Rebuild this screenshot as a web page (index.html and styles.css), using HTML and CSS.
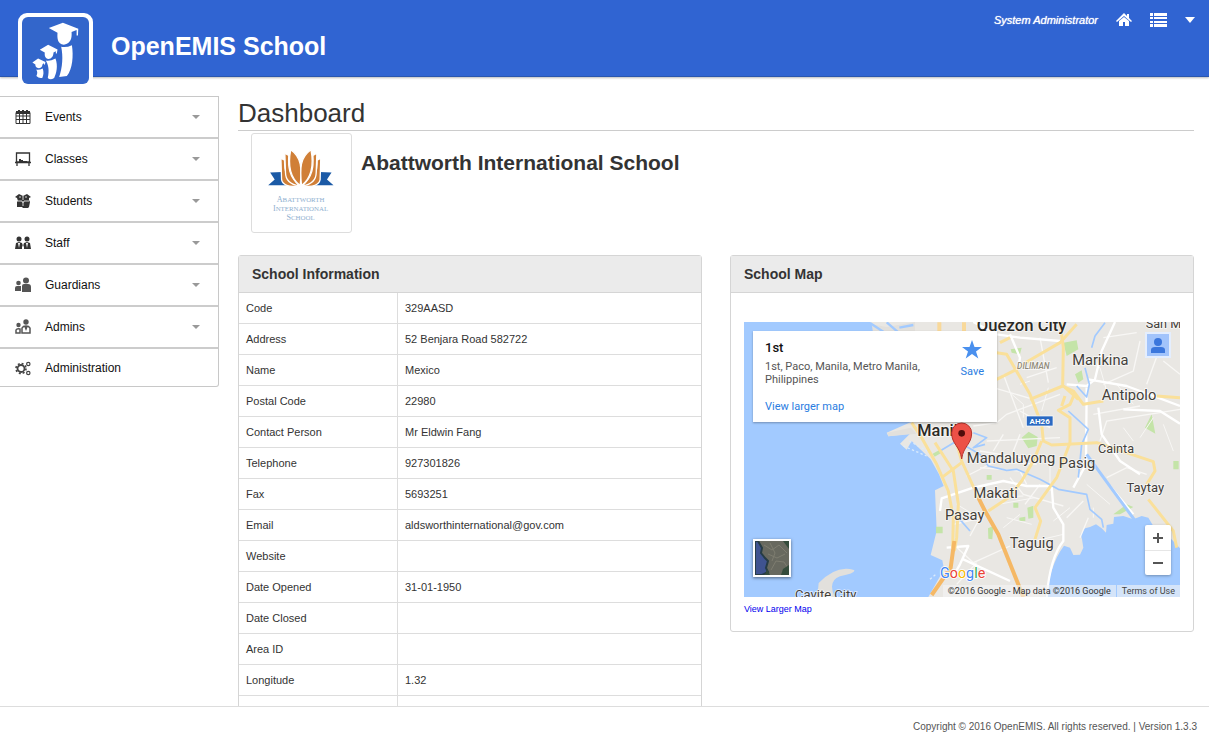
FILE: index.html
```html
<!DOCTYPE html>
<html lang="en">
<head>
    <meta charset="UTF-8">
    <meta name="viewport" content="width=device-width, initial-scale=1.0">
    <title>OpenEMIS School</title>
    <link rel="stylesheet" href="styles.css">
</head>
<body>
    <header class="header">
        <a href="#" class="brand">
            <span class="brand-logo">
                <svg viewBox="0 0 200 200" aria-hidden="true">
                    <g fill="#fff">
                        <path d="M80 33 L122 17 L168 35 L167 55 L163 55 L163 39 L148 45 C149 62 147 79 125 83 C105 81 105 62 106 47 Z"/>
                        <path d="M117 89 Q133 92 149 84 C154 115 151 155 134 176 L111 179 C121 150 123 118 117 89 Z"/>
                        <path d="M53 98 L78 83 L106 97 L104 109 L101 109 L101 102 L94 106 C94 117 88 125 79 125 C69 124 67 116 68 106 Z"/>
                        <path d="M71 130 Q83 133 100 124 C108 146 103 168 96 182 Q84 190 77 182 C82 160 79 143 71 130 Z"/>
                        <path d="M31 136 L48 124 L70 134 L68 144 L65 138 L61 142 C61 150 55 153 50 153 C43 153 39 147 40 142 Z"/>
                        <path d="M42 157 Q50 159 62 154 C65 164 65 172 61 181 Q51 184 43 176 C47 168 46 162 42 157 Z"/>
                    </g>
                </svg>
            </span>
            <span class="brand-name">OpenEMIS School</span>
        </a>
        <nav class="header-nav">
            <span class="user-name">System Administrator</span>
            <a href="#" aria-label="Home">
                <svg width="16" height="14" viewBox="0 0 16 14"><path fill="#fff" d="M8 0 L11 3 V1 H13 V5 L16 8 L15 9 L8 3 L1 9 L0 8 Z M8 4 L13 8 V13 H9 V9 H7 V13 H3 V8 Z"/></svg>
            </a>
            <button type="button" aria-label="Menu">
                <svg width="17" height="14" viewBox="0 0 17 14"><path fill="#fff" d="M0 0h3v3H0z M4 0h13v3H4z M0 4h3v2H0z M4 4h13v2H4z M0 8h3v2H0z M4 8h13v2H4z M0 11h3v3H0z M4 11h13v3H4z"/></svg>
            </button>
            <button type="button" aria-label="Account">
                <svg width="10" height="6" viewBox="0 0 10 6"><path fill="#fff" d="M0 0h10L5 6z"/></svg>
            </button>
        </nav>
    </header>

    <div class="page">
        <nav class="sidebar">
            <button type="button" class="menu-item">
                <svg class="menu-icon" viewBox="0 0 16 16"><path fill="none" stroke="#333" d="M1 3.500h14v11H1z M1 7h14 M1 10.500h14 M4.500 4v10 M8 4v10 M11.500 4v10"/><path fill="#333" d="M1 2h2V1h2v1h2V1h2v1h2V1h2v1h2v3H1z"/></svg>
                <span>Events</span><i class="caret"></i>
            </button>
            <button type="button" class="menu-item">
                <svg class="menu-icon" viewBox="0 0 16 16"><path fill="none" stroke="#333" stroke-width="1.300" d="M1.500 2h13v9h-13z M0 11.500h16 M2 11v4 M14 11v4"/><path fill="#333" d="M4 10V8h2v1h2v1h4v1H4z"/></svg>
                <span>Classes</span><i class="caret"></i>
            </button>
            <button type="button" class="menu-item">
                <svg class="menu-icon" viewBox="0 0 16 16"><g fill="#333"><path d="M0 4l4-3 4 2 4-2 4 3-2 1v2l1 2-1 5-1 1H8l-1-1H2V9l1-1-1-3z"/></g><path fill="none" stroke="#fff" stroke-width=".8" d="M8 3v4 M3 8h4l1 2 1-2h5 M4 4h2 M10 4h2 M8 10v3"/></svg>
                <span>Students</span><i class="caret"></i>
            </button>
            <button type="button" class="menu-item">
                <svg class="menu-icon" viewBox="0 0 16 16"><g fill="#333"><circle cx="4" cy="4" r="2.500"/><circle cx="12" cy="4" r="2.500"/><path d="M1 8l3-1 3 1 1 3 1-3 3-1 3 1 1 6H9V10l-1 2-1-2v4H0z"/></g><path fill="#fff" d="M3 8h2l-1 5z M11 8h2l-1 5z"/></svg>
                <span>Staff</span><i class="caret"></i>
            </button>
            <button type="button" class="menu-item">
                <svg class="menu-icon" viewBox="0 0 16 16"><g fill="#555"><circle cx="11" cy="3.500" r="3"/><circle cx="3.500" cy="6" r="2.300"/><path d="M7 9q0-2 2-2h4q3 0 3 3v5H7z M0 14v-3q0-2 2-2h4v5z"/></g></svg>
                <span>Guardians</span><i class="caret"></i>
            </button>
            <button type="button" class="menu-item">
                <svg class="menu-icon" viewBox="0 0 16 16"><g fill="#555"><circle cx="11" cy="3" r="2.700"/><circle cx="3.500" cy="6" r="2.200"/></g><path fill="none" stroke="#555" stroke-width="1.500" d="M7 14V9q1-2 4-2t4 2v5z M1 14v-3q1-2 4-1v4z"/><path fill="#555" d="M9 7h4l-2 5z"/></svg>
                <span>Admins</span><i class="caret"></i>
            </button>
            <a href="#" class="menu-item menu-item-last">
                <svg class="menu-icon" viewBox="0 0 16 16"><g fill="none" stroke="#444"><circle cx="6" cy="8.500" r="3.500" stroke-width="1.800"/><circle cx="6" cy="8.500" r="5" stroke-width="1.600" stroke-dasharray="2 1.930"/><circle cx="13.300" cy="4" r="1.700" stroke-width="1.200"/><circle cx="13.300" cy="13" r="1.700" stroke-width="1.200"/></g></svg>
                <span>Administration</span>
            </a>
        </nav>

        <main class="content">
            <h1 class="page-title">Dashboard</h1>
            <div class="school">
                <div class="school-logo">
                    <svg viewBox="0 0 300 300" role="img" aria-label="School logo">
                        <path fill="#1b5aa6" d="M54 118 L92 116 L125 157 L48 157 L68 139 Z M242 118 L204 116 L171 157 L248 157 L228 139 Z"/>
                        <g fill="#d07f37" stroke="#fff" stroke-width="4">
                            <path d="M87 74 L98 80 C98 110 98 130 140 159 C112 164 92 156 89 140 Z"/>
                            <path d="M99 59 L111 66 C109 100 111 130 144 159 C116 155 101 140 101 118 Z"/>
                            <path d="M117 48 C151 72 151 105 146 158 C116 135 107 100 117 48 Z"/>
                            <path d="M209 74 L198 80 C198 110 198 130 156 159 C184 164 204 156 207 140 Z"/>
                            <path d="M197 59 L185 66 C187 100 185 130 152 159 C180 155 195 140 195 118 Z"/>
                            <path d="M179 48 C145 72 145 105 150 158 C180 135 189 100 179 48 Z"/>
                        </g>
                        <g class="logo-text">
                            <text x="147" y="208">A<tspan font-size="21">BATTWORTH</tspan></text>
                            <text x="147" y="236">I<tspan font-size="21">NTERNATIONAL</tspan></text>
                            <text x="147" y="264">S<tspan font-size="21">CHOOL</tspan></text>
                        </g>
                    </svg>
                </div>
                <h2 class="school-name">Abattworth International School</h2>
            </div>

            <div class="panels">
                <section class="panel">
                    <h3 class="panel-title">School Information</h3>
                    <table class="info-table">
                        <tbody>
                            <tr><th scope="row">Code</th><td>329AASD</td></tr>
                            <tr><th scope="row">Address</th><td>52 Benjara Road 582722</td></tr>
                            <tr><th scope="row">Name</th><td>Mexico</td></tr>
                            <tr><th scope="row">Postal Code</th><td>22980</td></tr>
                            <tr><th scope="row">Contact Person</th><td>Mr Eldwin Fang</td></tr>
                            <tr><th scope="row">Telephone</th><td>927301826</td></tr>
                            <tr><th scope="row">Fax</th><td>5693251</td></tr>
                            <tr><th scope="row">Email</th><td>aldsworthinternational@gov.com</td></tr>
                            <tr><th scope="row">Website</th><td></td></tr>
                            <tr><th scope="row">Date Opened</th><td>31-01-1950</td></tr>
                            <tr><th scope="row">Date Closed</th><td></td></tr>
                            <tr><th scope="row">Area ID</th><td></td></tr>
                            <tr><th scope="row">Longitude</th><td>1.32</td></tr>
                            <tr><td></td><td></td></tr>
                        </tbody>
                    </table>
                </section>

                <section class="panel">
                    <h3 class="panel-title">School Map</h3>
                    <div class="map-body">
                        <div class="map">
                            <svg class="map-canvas" viewBox="12 13 1308 825" preserveAspectRatio="xMidYMid slice">
                                <rect x="12" y="13" width="1308" height="825" fill="#e9e7e3"/>
                                <!-- Laguna de Bay -->
                                <path fill="#a2caff" d="M915 838 C925 790 940 725 972 684 L990 690 L1000 712 L1020 711 L1030 690 L1026 665 L1022 650 L1035 632 L1050 628 L1068 620 L1085 632 L1098 645 L1100 622 L1120 618 L1122 598 L1150 595 L1180 605 L1205 595 L1225 600 L1240 625 L1290 660 L1320 692 V838 Z"/>
                                <!-- Manila Bay -->
                                <path fill="#a2caff" d="M12 13 H390 L410 38 L470 45 L520 310 L440 345 L445 356 L510 348 L480 378 L500 396 L515 370 L572 425 L597 470 L611 505 L585 518 L590 640 L572 712 L607 728 L612 755 L565 838 H12 Z"/>
                                <path fill="#e2e0dc" d="M395 20 L440 28 L525 13 V50 H400 Z M232 838 L236 796 Q290 740 342 757 Q350 766 300 776 Q262 790 284 838 Z M442 345 L512 330 L530 348 L445 356 Z"/>
                                <path fill="none" stroke="#a2caff" stroke-width="7" d="M390 16 L430 42 M440 14 L475 44 M478 30 L520 22"/>
                                <path fill="none" stroke="#dcebfb" stroke-width="4" stroke-dasharray="7 7" d="M490 385 L560 415 M508 370 L565 402 M570 785 L590 768"/>
                                <!-- parks -->
                                <g fill="#c4e4a8">
                                    <path d="M845 360 L866 342 L893 358 L890 385 L865 392 Z M970 75 L1010 68 L1015 95 L980 115 Z M1215 330 L1235 290 L1246 348 Z M1005 170 L1025 158 L1030 185 L1015 195 Z M862 570 L880 564 V600 L865 603 Z M744 632 L760 625 L757 665 L745 663 Z M588 627 H608 V647 H588 Z M578 408 L598 397 L602 407 L584 417 Z M812 95 L845 90 L840 110 L815 105 Z M740 472 H755 V486 H740 Z M820 555 H835 V570 H820 Z M1120 590 L1160 560 L1180 568 L1140 590 Z M1300 430 H1316 V455 H1300 Z M838 600 L856 597 V610 H838 Z"/>
                                </g>
                                <!-- minor streets -->
                                <g fill="none" stroke="#f8f7f5" stroke-width="4">
                                    <path d="M700 325 L770 315 L800 290 L960 230 M760 210 L880 245 M790 170 L850 330 M680 475 L770 430 L890 440 M720 400 L900 430 M720 450 L840 460 L860 500 M790 350 L760 400 M740 370 L960 360 M900 60 L925 195 M860 180 L950 150 M640 620 L730 600 M640 680 L700 735 L810 685 M690 655 L720 600 M650 800 L710 735 M855 560 L900 500 M810 480 L850 530 L970 565 M980 600 L1030 550 M1045 600 L1020 660 M1100 480 L1160 450 L1220 470 M1090 200 L1180 160 L1200 70 M1060 290 L1200 265 M1080 370 L1100 310 L1320 275 M1260 90 L1220 200 M1270 130 L1320 170 M840 280 L930 330 M820 400 L840 350 M985 450 L1040 430 M1090 60 L1190 45"/>
                                    <path stroke-width="3" d="M840 200 L870 190 M810 225 L850 260 L850 300 M925 210 L905 280 M930 430 L930 520 M740 540 L850 535 M775 560 L885 540 M800 600 L875 620 M790 630 L840 590 M885 670 L970 650 M940 610 L990 570 M650 560 L700 590 M1010 120 L1080 150 L1100 220 M1130 200 L1180 260 M1240 300 L1200 360 M1270 320 L1300 400 M1150 330 L1180 370 M1040 500 L1110 560 M1060 600 L1060 570"/>
                                </g>
                                <g fill="none" stroke="#fff" stroke-width="7" stroke-linejoin="round">
                                    <path d="M600 580 L605 542 L700 510 L790 490 L860 505 L935 505 L940 570 L970 620 L970 670 Q930 720 920 838"/>
                                    <path d="M1125 13 L1085 100 L1065 185 L1040 205 L980 200 M1045 185 L1160 205 L1320 265 M1040 210 L1038 440 L1000 510 M1075 270 L1085 350 L1140 430 L1200 470 M1150 275 L1260 280 L1320 318"/>
                                    <path d="M620 690 L685 685 L660 740 L640 775 M670 725 L810 790 M810 50 L840 120 L835 150 M1110 505 L1180 590 M700 13 L770 50 L840 60 L960 70"/>
                                </g>
                                <!-- rivers -->
                                <g fill="none" stroke="#a2caff" stroke-width="5" stroke-linejoin="round">
                                    <path d="M600 400 L650 370 L720 410 L745 445 L800 458 L830 455 L900 485 L955 515 L1040 530 L1050 575 L1085 605 L1090 630"/>
                                    <path d="M1095 15 L1065 55 L1055 90 M1010 205 L1040 238 L1048 200 L1035 150 M985 280 L1045 335 L1025 380 L1015 480"/>
                                    <path d="M700 345 L740 360 L700 390 L735 380 M655 600 L690 640"/>
                                    <path stroke-width="9" d="M1040 410 L1188 613"/>
                                </g>
                                <!-- main roads -->
                                <g fill="none" stroke="#fae09a" stroke-width="9" stroke-linejoin="round">
                                    <path d="M515 315 L545 360 L590 440 L625 520 L640 600 L638 690 M585 375 L640 460 L655 560 L650 660 L643 700"/>
                                    <path d="M640 340 L665 430 L715 540 M605 480 L665 435"/>
                                    <path d="M770 185 L830 155 L865 130 L960 75 L1010 20 M770 105 L800 110 L870 230 L905 320 L910 370 L935 382 L1070 375 L1130 395 L1240 432 L1245 460 L1220 500 M1225 545 L1300 640 L1310 690"/>
                                    <path d="M960 13 L970 90 L968 205 L870 245 M968 205 L1000 220 L1030 260 L1090 250 M1250 235 L1320 240 M1005 225 L990 260 L955 278 L990 300 L990 375 L950 480 L885 570 L902 610 L885 665"/>
                                    <path d="M905 370 L880 430 L845 490 L805 540 L745 580 M780 75 L810 60 M965 265 L975 235 M970 205 L1015 245"/>
                                </g>
                                <path fill="none" stroke="#f5b865" stroke-width="12" d="M715 540 L735 580 L775 650 L850 838 M643 670 L632 750 L575 832"/>
                                <path fill="none" stroke="#f9d99a" stroke-width="12" d="M598 14v32 M672 14v32"/>

                                <g class="map-labels">
                                    <text class="label-city" x="845" y="40" font-size="50">Quezon City</text>
                                    <text class="label-start" x="1217" y="30" font-size="38">San M</text>
                                    <text x="1081" y="143" font-size="44">Marikina</text>
                                    <text x="1167" y="246" font-size="44">Antipolo</text>
                                    <text class="label-area" x="880" y="154" font-size="25">DILIMAN</text>
                                    <text class="label-city" x="606" y="354" font-size="49">Manila</text>
                                    <text x="813" y="436" font-size="44">Mandaluyong</text>
                                    <text x="1011" y="450" font-size="44">Pasig</text>
                                    <text x="1128" y="406" font-size="38">Cainta</text>
                                    <text x="1216" y="523" font-size="39">Taytay</text>
                                    <text x="767" y="540" font-size="44">Makati</text>
                                    <text x="674" y="607" font-size="44">Pasay</text>
                                    <text x="875" y="691" font-size="44">Taguig</text>
                                    <text x="257" y="844" font-size="39">Cavite City</text>
                                </g>
                                <rect x="859" y="295" width="80" height="30" fill="#2a69c2" stroke="#fff" stroke-width="2"/>
                                <text class="label-road" x="899" y="319" font-size="24">AH26</text>

                                <!-- pin -->
                                <path fill="#ec5147" stroke="#b8312a" stroke-width="3" d="M665 424 C660 385 635 380 635 346 A30 30 0 0 1 695 346 C695 380 670 385 665 424 Z"/>
                                <circle cx="665" cy="347" r="10" fill="#500d0b"/>
                                <text class="google" x="600" y="782" font-size="43"><tspan fill="#4285f4">G</tspan><tspan fill="#ea4335">o</tspan><tspan fill="#fbbc05">o</tspan><tspan fill="#4285f4">g</tspan><tspan fill="#34a853">l</tspan><tspan fill="#ea4335">e</tspan></text>
                            </svg>

                            <div class="place-card">
                                <div class="place-info">
                                    <strong class="place-name">1st</strong>
                                    <p class="place-address">1st, Paco, Manila, Metro Manila, Philippines</p>
                                    <a href="#">View larger map</a>
                                </div>
                                <button type="button" class="place-save">
                                    <svg width="20" height="19" viewBox="0 0 20 19"><path fill="#4a90ee" d="M10 0l2.500 7H20l-6 4.500 2.300 7L10 14l-6.300 4.500 2.300-7L0 7h7.500z"/></svg>
                                    Save
                                </button>
                            </div>

                            <button type="button" class="map-user" aria-label="Sign in">
                                <svg viewBox="0 0 22 22"><rect width="22" height="22" fill="#a2c4fb"/><circle cx="11" cy="8" r="4" fill="#3a76dc"/><path fill="#3a76dc" d="M4 19v-3q0-3 4-3h6q4 0 4 3v3z"/></svg>
                            </button>

                            <button type="button" class="map-satellite" aria-label="Satellite view">
                                <svg viewBox="0 0 34 34"><rect width="34" height="34" fill="#68695f"/><path fill="#3f5390" stroke="#263c45" stroke-width="2" d="M0 0H3L7 7L6 12L10 17L13 20L11 27L13 31L7 34H0Z"/><path fill="none" stroke="#7e7d70" d="M9 4l8 5 7-5 8 8 M13 13l9 4 8-4 M16 29l5-9 8 1 4 6 M15 2l5 10-3 8"/><path fill="#354c3c" d="M26 34l2-6 6-4v10z M28 0h6v8z M12 28l3 6h-5z"/></svg>
                            </button>

                            <div class="map-zoom">
                                <button type="button" aria-label="Zoom in"><svg width="10" height="10" viewBox="0 0 10 10"><path fill="#555" d="M4 0h2v4h4v2H6v4H4V6H0V4h4z"/></svg></button>
                                <button type="button" aria-label="Zoom out"><svg width="10" height="10" viewBox="0 0 10 10"><path fill="#555" d="M0 4h10v2H0z"/></svg></button>
                            </div>

                            <div class="map-credits">
                                <span>©2016 Google - Map data ©2016 Google</span>
                                <a href="#">Terms of Use</a>
                            </div>
                        </div>
                        <a href="#" class="map-link">View Larger Map</a>
                    </div>
                </section>
            </div>
        </main>
    </div>

    <footer class="footer">Copyright © 2016 OpenEMIS. All rights reserved. | Version 1.3.3</footer>
</body>
</html>
```
FILE: styles.css
```css
* {
    box-sizing: border-box;
}
body {
    display: flex;
    flex-direction: column;
    height: 100vh;
    margin: 0;
    font-family: "Liberation Sans", Arial, sans-serif;
    font-size: 11px;
    color: #333;
    background-color: #fff;
}
button {
    padding: 0;
    border: 0;
    background: none;
    font-family: inherit;
    cursor: pointer;
}
a {
    text-decoration: none;
}
svg {
    display: block;
}

/* header */
.header {
    position: relative;
    z-index: 1;
    display: flex;
    flex: none;
    justify-content: space-between;
    align-items: flex-start;
    height: 77px;
    padding: 13px 14px 0 18px;
    background-color: #3064d2;
    border-bottom: 1px solid #2956ae;
    box-shadow: 0 1px 2px #bbb;
}
.brand {
    display: flex;
    gap: 18px;
    color: #fff;
}
.brand-logo {
    width: 75px;
    height: 75px;
    border: 4px solid #fff;
    border-radius: 9px;
    background-color: #fff;
}
.brand-logo svg {
    border-radius: 6px;
    background-color: #3366cb;
}
.brand-name {
    font-size: 25px;
    font-weight: bold;
    line-height: 66px;
}
.header-nav {
    display: flex;
    align-items: center;
    gap: 18px;
    height: 14px;
}
.user-name {
    font-size: 11px;
    font-style: italic;
    color: #fff;
    text-shadow: 0 0 1px #fff;
}

/* layout */
.page {
    display: flex;
    flex: 1;
    min-height: 0;
}
.content {
    flex: 1;
    min-width: 0;
    padding: 19px 15px 20px 19px;
    overflow-y: auto;
    scrollbar-width: none;
}

/* sidebar */
.sidebar {
    flex: none;
    align-self: flex-start;
    width: 219px;
    margin-top: 19px;
    border: 1px solid #c8c8c8;
    border-left: 0;
    border-radius: 0 0 3px 0;
}
.menu-item {
    display: flex;
    align-items: center;
    gap: 14px;
    width: 100%;
    height: 42px;
    padding: 0 18px 0 15px;
    border-bottom: 2px solid #ccc;
    font-size: 12px;
    color: #111;
    text-align: left;
}
.menu-item-last {
    height: 37px;
    border-bottom: 0;
}
.menu-icon {
    width: 16px;
    height: 16px;
}
.caret {
    margin-left: auto;
    border: 4px solid transparent;
    border-top-color: #999;
    border-bottom: 0;
}

/* school */
.page-title {
    margin: 0;
    border-bottom: 1px solid #ccc;
    font-size: 26px;
    font-weight: normal;
    line-height: 34px;
}
.school {
    display: flex;
    gap: 9px;
    margin: 2px 13px 22px;
}
.school-logo {
    flex: none;
    width: 101px;
    height: 100px;
    border: 1px solid #ddd;
    border-radius: 3px;
}
.school-logo svg {
    width: 100%;
    height: 100%;
}
.logo-text {
    fill: #8fb0d0;
    font-family: "Liberation Serif", serif;
    font-size: 25px;
    text-anchor: middle;
}
.school-name {
    margin: 0;
    font-size: 21px;
    line-height: 60px;
}

/* panels */
.panels {
    display: grid;
    grid-template-columns: 1fr 1fr;
    align-items: start;
    gap: 28px;
}
.panel {
    border: 1px solid #d5d5d5;
    border-radius: 3px;
}
.panel-title {
    margin: 0;
    padding: 0 13px;
    border-bottom: 1px solid #d5d5d5;
    background-color: #ebebeb;
    font-size: 14px;
    line-height: 36px;
}
.info-table {
    width: 100%;
    border-spacing: 0;
    table-layout: fixed;
}
.info-table th,
.info-table td {
    height: 31px;
    padding: 0 7px;
    border-bottom: 1px solid #ddd;
    font-weight: normal;
    text-align: left;
}
.info-table tr > :first-child {
    width: 159px;
    border-right: 1px solid #ddd;
}

/* map */
.map-body {
    padding: 29px 13px 16px;
}
.map {
    position: relative;
    height: 275px;
    overflow: hidden;
    font-family: Roboto, sans-serif;
}
.map a {
    color: #2a7de1;
}
.map-canvas {
    width: 100%;
    height: 100%;
}
.map-labels {
    fill: #43403a;
    stroke: #fff;
    stroke-width: 5px;
    stroke-opacity: 0.7;
    paint-order: stroke;
    text-anchor: middle;
}
.label-start {
    text-anchor: start;
}
.label-city {
    font-weight: 500;
    fill: #2b2924;
}
.label-area {
    fill: #8f8a7a;
    font-style: italic;
    font-weight: 500;
}
.label-road {
    fill: #fff;
    font-weight: bold;
    text-anchor: middle;
}
.google {
    stroke: #fff;
    stroke-width: 5px;
    paint-order: stroke;
}
.place-card {
    position: absolute;
    top: 9px;
    left: 9px;
    display: flex;
    justify-content: space-between;
    width: 244px;
    height: 91px;
    padding: 9px 13px 9px 12px;
    background-color: #fff;
    box-shadow: 0 1px 2px rgba(0, 0, 0, 0.3);
}
.place-info {
    width: 160px;
}
.place-name {
    display: block;
    font-size: 13px;
    font-weight: 500;
    line-height: 16px;
    color: #111;
}
.place-address {
    margin: 4px 0 14px;
    line-height: 13px;
    color: #555;
}
.place-save {
    display: flex;
    flex-direction: column;
    align-self: flex-start;
    align-items: center;
    gap: 6px;
    font-size: 11px;
    color: #2a7de1;
}
.map-user {
    position: absolute;
    top: 10px;
    right: 9px;
    width: 26px;
    height: 26px;
    padding: 2px;
    background-color: #e4eefe;
}
.map-satellite {
    position: absolute;
    bottom: 20px;
    left: 9px;
    width: 38px;
    height: 38px;
    border: 2px solid #fff;
    box-shadow: 0 1px 3px rgba(0, 0, 0, 0.5);
}
.map-zoom {
    position: absolute;
    right: 9px;
    bottom: 22px;
    width: 26px;
    border-radius: 2px;
    background-color: #fff;
    box-shadow: 0 1px 3px rgba(0, 0, 0, 0.3);
}
.map-zoom button {
    display: flex;
    align-items: center;
    justify-content: center;
    width: 100%;
    height: 25px;
}
.map-zoom button + button {
    border-top: 1px solid #e6e6e6;
}
.map-credits {
    position: absolute;
    right: 0;
    bottom: 0;
    display: flex;
    gap: 1px;
    font-size: 9px;
    line-height: 12px;
}
.map-credits > * {
    padding: 0 5px;
    background-color: rgba(245, 245, 245, 0.6);
}
.map-credits a {
    color: #444;
}
.map-link {
    display: block;
    margin-top: 6px;
    font-size: 9px;
    line-height: 12px;
    color: #0000ee;
}

/* footer */
.footer {
    flex: none;
    height: 42px;
    padding-right: 12px;
    border-top: 1px solid #ddd;
    font-size: 10px;
    line-height: 40px;
    text-align: right;
    color: #555;
}
```
